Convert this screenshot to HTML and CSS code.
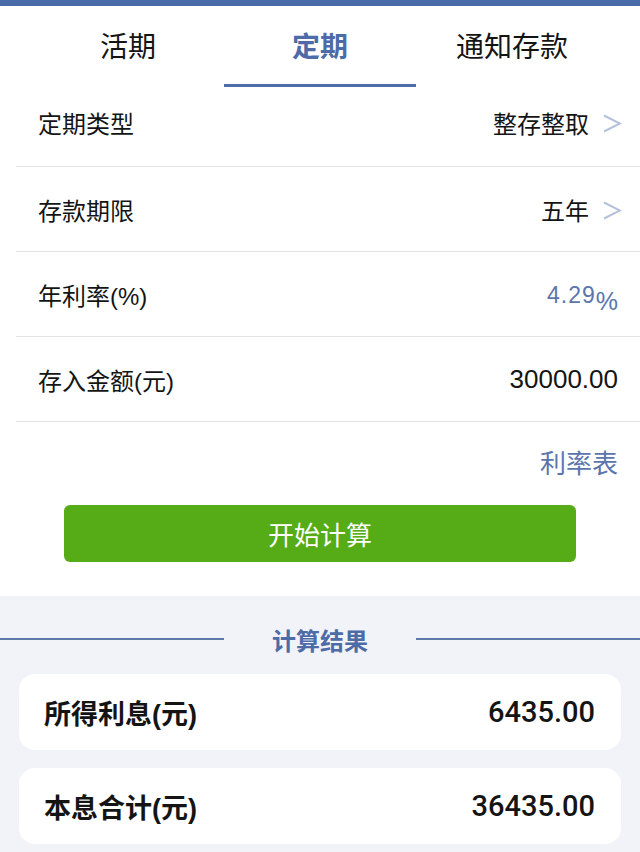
FILE: index.html
```html
<!DOCTYPE html>
<html lang="zh-CN">
<head>
<meta charset="utf-8">
<title>存款计算器</title>
<link rel="stylesheet" href="styles.css">
</head>
<body>
<div class="topbar"></div>
<nav class="tabs">
  <div class="tab">活期</div>
  <div class="tab active">定期</div>
  <div class="tab">通知存款</div>
</nav>
<section class="form">
  <div class="row row-first">
    <span class="label">定期类型</span>
    <span class="value">整存整取<svg class="chev" viewBox="0 0 20 20" width="20" height="20"><path d="M2 1.5 L18 9.5 L2 17.5" fill="none" stroke="#b5c1dc" stroke-width="2"/></svg></span>
  </div>
  <div class="row">
    <span class="label">存款期限</span>
    <span class="value">五年<svg class="chev" viewBox="0 0 20 20" width="20" height="20"><path d="M2 1.5 L18 9.5 L2 17.5" fill="none" stroke="#b5c1dc" stroke-width="2"/></svg></span>
  </div>
  <div class="row row-plain">
    <span class="label">年利率(%)</span>
    <span class="value rate"><span class="rate-num">4.29</span><span class="rate-pct">%</span></span>
  </div>
  <div class="row row-plain">
    <span class="label">存入金额(元)</span>
    <span class="value num">30000.00</span>
  </div>
</section>
<div class="link-line"><span class="link">利率表</span></div>
<div class="btn-wrap"><button class="btn">开始计算</button></div>
<section class="result">
  <div class="result-title">
    <span class="rule"></span>
    <span class="title-text">计算结果</span>
    <span class="rule"></span>
  </div>
  <div class="card">
    <span class="card-label">所得利息(元)</span>
    <span class="card-value">6435.00</span>
  </div>
  <div class="card">
    <span class="card-label">本息合计(元)</span>
    <span class="card-value">36435.00</span>
  </div>
</section>
</body>
</html>
```

FILE: styles.css
```css
* { box-sizing: border-box; }
html, body {
  margin: 0;
  padding: 0;
  background: #ffffff;
  font-family: "Liberation Sans", "Noto Sans CJK SC", sans-serif;
  color: #141414;
}
body { width: 640px; min-height: 852px; background: #f2f3f8; }

.topbar { height: 6px; background: #4b6aaa; }

.tabs {
  display: grid;
  grid-template-columns: repeat(3, 1fr);
  padding: 0 32px;
  background: #fff;
}
.tab {
  height: 81px;
  display: flex;
  align-items: center;
  justify-content: center;
  font-size: 28px;
  border-bottom: 3px solid transparent;
  color: #141414;
}
.tab.active {
  color: #4d6ba6;
  font-weight: 700;
  border-bottom-color: #4d6ba6;
}

.form { background: #fff; padding-left: 16px; }
.row {
  height: 85px;
  display: flex;
  align-items: center;
  justify-content: space-between;
  border-bottom: 1px solid #e3e3e6;
  padding: 0 18px 0 22px;
  font-size: 24px;
}
.row-first { height: 80px; padding-bottom: 8px; }
.row-plain { padding-right: 22px; }
.value { display: flex; align-items: center; }
.chev { margin-left: 13px; margin-top: 3px; width: 20px; height: 20px; }
.num { font-size: 26px; }
.rate { color: #5b76ad; align-items: baseline; }
.rate-num { font-size: 23px; letter-spacing: 1px; }
.rate-pct { font-size: 25px; position: relative; top: 7px; }

.link-line {
  background: #fff;
  display: flex;
  justify-content: flex-end;
  padding: 27px 22px 0 0;
}
.link { font-size: 26px; line-height: 30px; color: #5b76ad; }

.btn-wrap { background: #fff; padding: 26px 64px 34px; }
.btn {
  display: block;
  width: 100%;
  height: 57px;
  border: none;
  border-radius: 6px;
  background: #55ac17;
  color: #fff;
  font-family: "Liberation Sans", "Noto Sans CJK SC", sans-serif;
  font-size: 26px;
  padding: 0;
}

.result { background: #f2f3f8; padding: 28px 19px 9px; }
.result-title {
  display: flex;
  align-items: center;
  margin: 0 -19px 20px;
  height: 30px;
}
.rule { flex: 1; height: 2px; background: #5d78a9; }
.title-text {
  width: 192px;
  text-align: center;
  font-size: 24px;
  font-weight: 700;
  color: #4d6ba6;
}
.card {
  height: 76px;
  background: #fff;
  border-radius: 16px;
  display: flex;
  align-items: center;
  justify-content: space-between;
  padding: 0 26px 0 25px;
  margin-bottom: 18px;
}
.card:last-child { margin-bottom: 0; }
.card-label { font-size: 27px; font-weight: 700; }
.card-value { font-family: Roboto, "Liberation Sans", sans-serif; font-size: 29px; font-weight: 500; }
```
